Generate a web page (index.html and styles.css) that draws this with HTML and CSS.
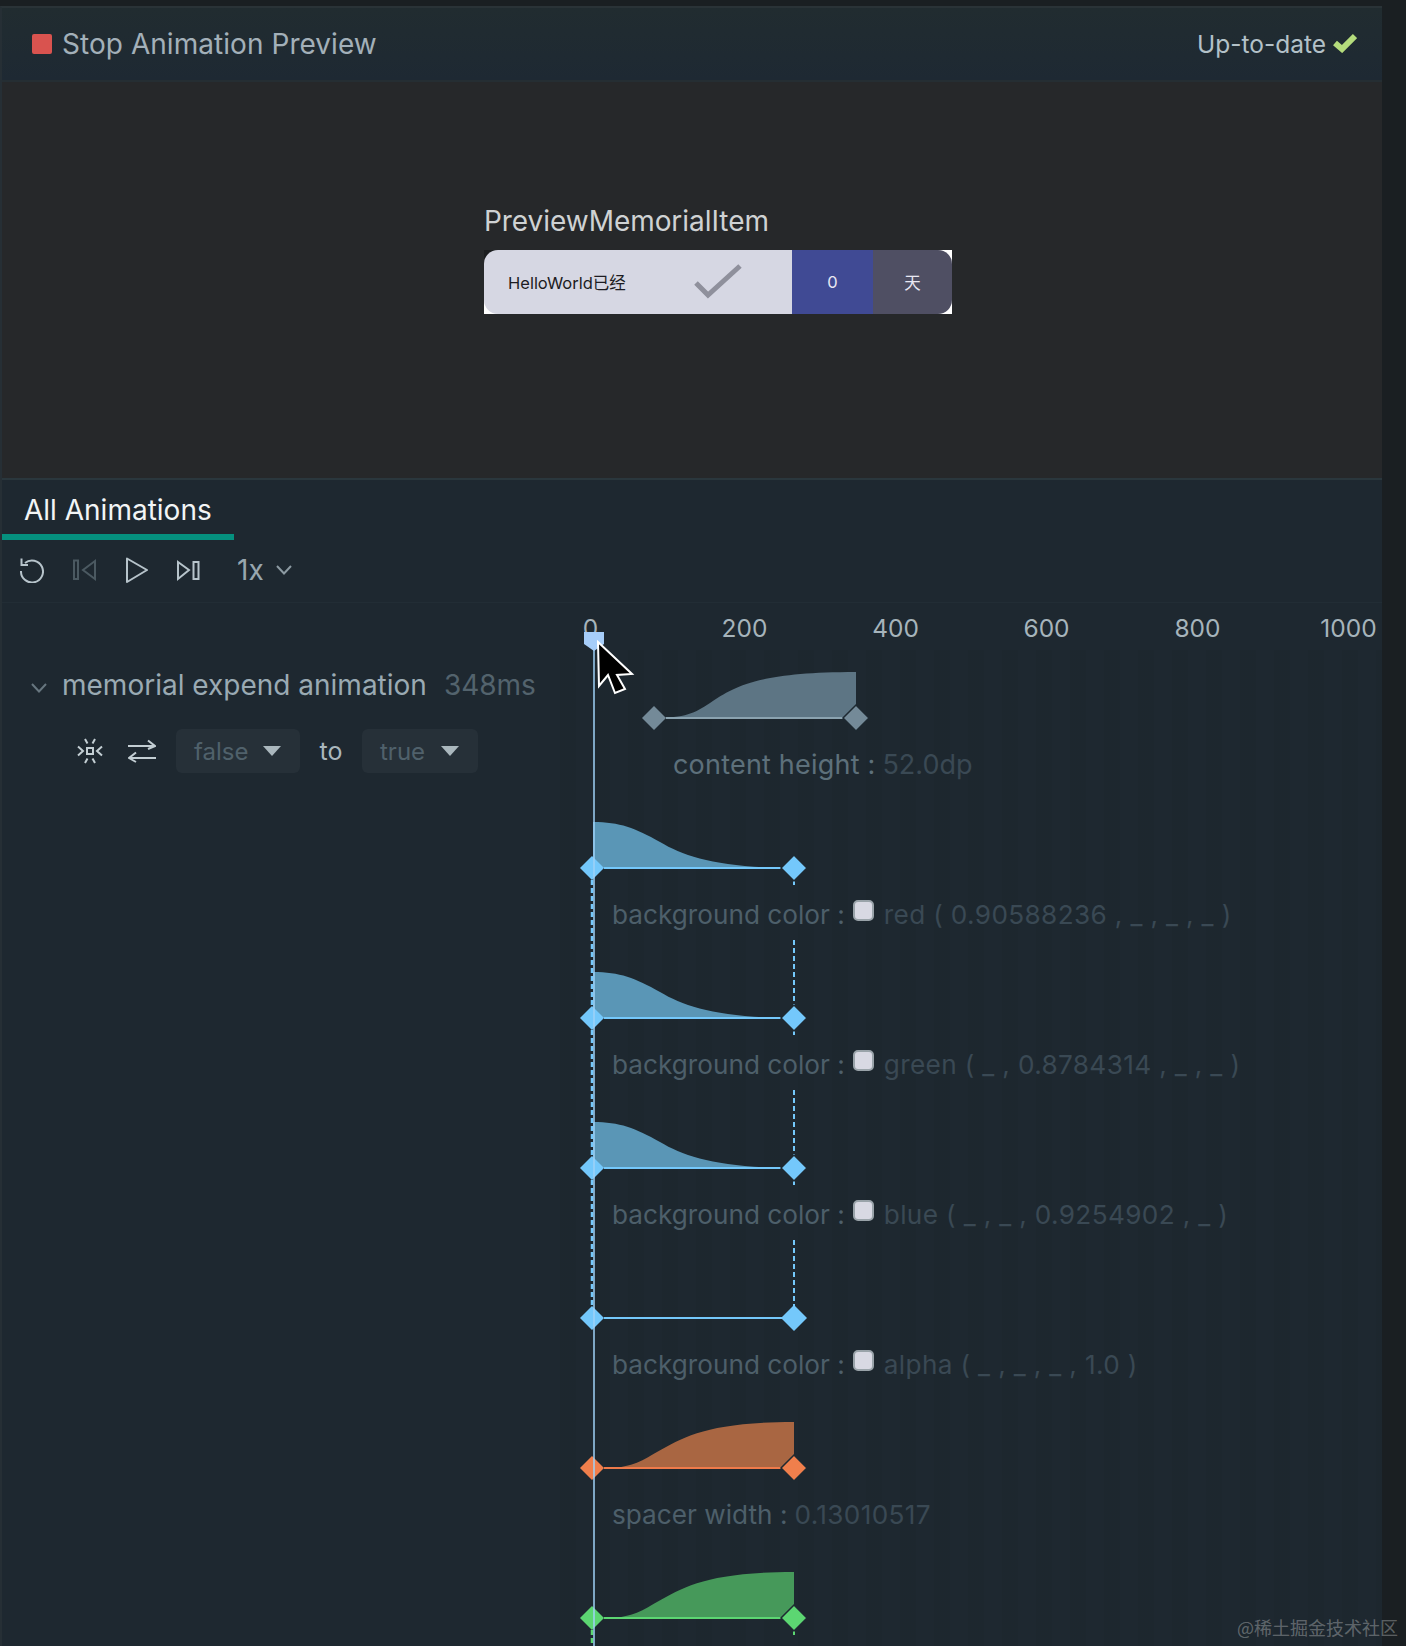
FILE: index.html
```html
<!DOCTYPE html>
<html>
<head>
  <title>Animation Preview</title>
  <link rel="stylesheet" href="styles.css">
</head>
<body>

<div class="app">
  <header class="topbar">
    <div class="stop">
      <span class="stop-icon"></span>
      <span>Stop Animation Preview</span>
    </div>
    <div class="status">
      <span>Up-to-date</span>
      <svg class="status-check" width="24" height="20" viewBox="0 0 24 20"><path d="M2 10 L9 16 L22 3" fill="none" stroke="#b4dc7c" stroke-width="6"/></svg>
    </div>
  </header>

  <section class="preview">
    <div class="preview-title">PreviewMemorialItem</div>
    <div class="item">
      <div class="item-inner">
        <div class="item-main">
          <span>HelloWorld已经</span>
          <svg class="item-check" width="50" height="36" viewBox="0 0 50 36"><path d="M2 19 L14 31 L46 2" fill="none" stroke="#8f909c" stroke-width="5"/></svg>
        </div>
        <div class="item-count">0</div>
        <div class="item-unit">天</div>
      </div>
    </div>
  </section>

  <div class="tabs">
    <div class="tab">All Animations</div>
  </div>

  <div class="toolbar">
    <svg class="tool" width="24" height="26" viewBox="0 0 24 26"><path d="M5 6 A11 11 0 1 1 1 14 M1.5 1.5 V8 H8" fill="none" stroke="#b7c4cb" stroke-width="2"/></svg>
    <svg class="tool" width="24" height="26" viewBox="0 0 24 26"><path d="M2 3.5 H6 V22 H2 Z M23 4 L11 13 L23 22 Z" fill="none" stroke="#4b5961" stroke-width="2"/></svg>
    <svg class="tool" width="24" height="26" viewBox="0 0 24 26"><path d="M3 1.5 L23 13 L3 25 Z" fill="none" stroke="#b7c4cb" stroke-width="2" stroke-linejoin="round"/></svg>
    <svg class="tool" width="24" height="26" viewBox="0 0 24 26"><path d="M2 5 L13 13 L2 22 Z M17.500 5 H22.500 V22 H17.500 Z" fill="none" stroke="#b7c4cb" stroke-width="2"/></svg>
    <span class="speed">1x</span>
    <svg width="16" height="10" viewBox="0 0 16 10"><path d="M1 1 L8 8.500 L15 1" fill="none" stroke="#8c9aa2" stroke-width="2"/></svg>
  </div>

  <div class="anim">
    <aside class="side">
      <div class="anim-title">
        <svg class="anim-chevron" width="16" height="10" viewBox="0 0 16 10"><path d="M1 1 L8 8.500 L15 1" fill="none" stroke="#67767f" stroke-width="2"/></svg>
        <span class="anim-name">memorial expend animation</span>
        <span class="anim-time">348ms</span>
      </div>
      <div class="anim-state">
        <svg width="26" height="26" viewBox="0 0 26 26"><path d="M10 10 H16 V16 H10 Z M8 1 L10.500 5.500 M18 1 L15.500 5.500 M8 25 L10.500 20.500 M18 25 L15.500 20.500 M1 8.500 L6 13 L1 17.500 M25 8.500 L20 13 L25 17.500" fill="none" stroke="#c3ced3" stroke-width="2"/></svg>
        <svg class="swap" width="28" height="24" viewBox="0 0 28 24"><path d="M0 7 H27 M20 1.500 L27 7 L20 10 M28 19 H1 M8 13.500 L1 19 L8 23" fill="none" stroke="#c3ced3" stroke-width="2"/></svg>
        <div class="chip chip-false">false<span class="caret"></span></div>
        <span class="to">to</span>
        <div class="chip chip-true">true<span class="caret"></span></div>
      </div>
    </aside>

    <div class="timeline">
      <div class="ruler">
        <span>0</span><span>200</span><span>400</span><span>600</span><span>800</span><span>1000</span>
      </div>

      <div class="track">
        <svg class="chart" width="320" height="90" viewBox="0 0 320 90">
          <path d="M94 68 C125 68 135 63 150 53 C175 36 200 22 296 22 V68 Z" fill="#5d7584"/>
          <path d="M106 68 H284" stroke="#8ba3b0" stroke-width="2"/>
          <path d="M94 56 L106 68 L94 80 L82 68 Z" fill="#748a98"/>
          <path d="M296 55 L309 68 L296 81 L283 68 Z" fill="#748a98" stroke="#1e2931" stroke-width="1.500"/>
        </svg>
        <div class="label label-first"><span class="key key-bright">content height :</span><span class="value">52.0dp</span></div>
      </div>

      <div class="track">
        <svg class="chart" width="320" height="90" viewBox="0 0 320 90">
          <path d="M33 22 C60 22 75 28 100 42 C125 57 160 68 234 68 H33 Z" fill="#5a96b6"/>
          <path d="M44 68 H222" stroke="#74c8fb" stroke-width="2"/>
          <path d="M234 80 V88" class="dash"/>
          <path d="M32 56 L44 68 L32 80 L20 68 Z" fill="#74c8fb"/>
          <path d="M234 55 L247 68 L234 81 L221 68 Z" fill="#74c8fb" stroke="#1e2931" stroke-width="1.500"/>
        </svg>
        <div class="label"><span class="key">background color :</span><span class="swatch"></span><span class="value">red ( 0.90588236 , _ , _ , _ )</span></div>
      </div>

      <div class="track">
        <svg class="chart" width="320" height="90" viewBox="0 0 320 90">
          <path d="M234 -10 V56 M234 80 V88" class="dash"/>
          <path d="M33 22 C60 22 75 28 100 42 C125 57 160 68 234 68 H33 Z" fill="#5a96b6"/>
          <path d="M44 68 H222" stroke="#74c8fb" stroke-width="2"/>
          <path d="M32 56 L44 68 L32 80 L20 68 Z" fill="#74c8fb"/>
          <path d="M234 55 L247 68 L234 81 L221 68 Z" fill="#74c8fb" stroke="#1e2931" stroke-width="1.500"/>
        </svg>
        <div class="label"><span class="key">background color :</span><span class="swatch"></span><span class="value">green ( _ , 0.8784314 , _ , _ )</span></div>
      </div>

      <div class="track">
        <svg class="chart" width="320" height="90" viewBox="0 0 320 90">
          <path d="M234 -10 V56 M234 80 V88" class="dash"/>
          <path d="M33 22 C60 22 75 28 100 42 C125 57 160 68 234 68 H33 Z" fill="#5a96b6"/>
          <path d="M44 68 H222" stroke="#74c8fb" stroke-width="2"/>
          <path d="M32 56 L44 68 L32 80 L20 68 Z" fill="#74c8fb"/>
          <path d="M234 55 L247 68 L234 81 L221 68 Z" fill="#74c8fb" stroke="#1e2931" stroke-width="1.500"/>
        </svg>
        <div class="label"><span class="key">background color :</span><span class="swatch"></span><span class="value">blue ( _ , _ , 0.9254902 , _ )</span></div>
      </div>

      <div class="track">
        <svg class="chart" width="320" height="90" viewBox="0 0 320 90">
          <path d="M234 -10 V56" class="dash"/>
          <path d="M44 68 H222" stroke="#74c8fb" stroke-width="2"/>
          <path d="M32 56 L44 68 L32 80 L20 68 Z" fill="#74c8fb"/>
          <path d="M234 55 L247 68 L234 81 L221 68 Z" fill="#74c8fb"/>
        </svg>
        <div class="label"><span class="key">background color :</span><span class="swatch"></span><span class="value">alpha ( _ , _ , _ , 1.0 )</span></div>
      </div>

      <div class="track">
        <svg class="chart" width="320" height="90" viewBox="0 0 320 90">
          <path d="M45 68 C70 68 80 62 97 52 C125 36 150 22 234 22 V68 Z" fill="#a96642"/>
          <path d="M44 68 H222" stroke="#ee7a4a" stroke-width="2"/>
          <path d="M32 56 L44 68 L32 80 L20 68 Z" fill="#f07f4c"/>
          <path d="M234 55 L247 68 L234 81 L221 68 Z" fill="#f07f4c" stroke="#1e2931" stroke-width="1.500"/>
        </svg>
        <div class="label"><span class="key">spacer width :</span><span class="value">0.13010517</span></div>
      </div>

      <div class="track">
        <svg class="chart" width="320" height="90" viewBox="0 0 320 90">
          <path d="M45 68 C70 68 80 62 97 52 C125 36 150 22 234 22 V68 Z" fill="#46995a"/>
          <path d="M44 68 H222" stroke="#5cd672" stroke-width="2"/>
          <path d="M234 80 V88" class="dash dash-green"/>
          <path d="M32 56 L44 68 L32 80 L20 68 Z" fill="#5cd672"/>
          <path d="M234 55 L247 68 L234 81 L221 68 Z" fill="#5cd672" stroke="#1e2931" stroke-width="1.500"/>
        </svg>
      </div>

      <!-- playhead, mouse pointer and the dashed line sit over the tracks -->
      <svg class="playhead" width="100" height="1043" viewBox="0 0 100 1043">
        <path d="M32 277 V403 M32 427 V553 M32 577 V703" stroke="#74c8fb" stroke-width="2.500" stroke-dasharray="5 3" fill="none"/>
        <path d="M32 1027 V1043" stroke="#5cd672" stroke-width="2.500" stroke-dasharray="5 3" fill="none"/>
        <path d="M34 36 V1043" stroke="#9fd2f7" stroke-width="1.500"/>
        <path d="M24 29 H44 V41 L34 48 L24 41 Z" fill="#a6cdf9"/>
        <path d="M38 39 L72 71 L57 72 L65 86 L55 90 L48 72 L39 83 Z" fill="#000" stroke="#fff" stroke-width="2"/>
      </svg>
    </div>
  </div>
</div>

<div class="watermark">@稀土掘金技术社区</div>

</body>
</html>
```

FILE: styles.css
```css
body {
  margin: 0;
  padding: 0;
  height: 1646px;
  overflow: hidden;
  background: #1a1f22;
  font-family: "Inter", "Noto Sans CJK SC", sans-serif;
}

.app {
  width: 1380px;
  height: 1640px;
  margin-top: 6px;
  border-top: 2px solid #2a3337;
  border-left: 2px solid #262f35;
  overflow: hidden;
  background: #1e2830;
}

.topbar {
  height: 74px;
  box-sizing: border-box;
  padding: 0 25px 0 30px;
  display: flex;
  align-items: center;
  justify-content: space-between;
  background: linear-gradient(180deg, #212c30, #1e2933);
  border-bottom: 2px solid #252e33;
}
.stop {
  display: flex;
  align-items: center;
  gap: 10px;
  font-size: 28px;
  letter-spacing: 0.05px;
  color: #a3b0b9;
}
.stop-icon {
  width: 20px;
  height: 20px;
  border-radius: 2px;
  background: #d9534f;
}
.status {
  display: flex;
  align-items: center;
  gap: 7px;
  font-size: 24.5px;
  color: #b3c1c8;
}
.status-check {
  margin-bottom: 3px;
}

.preview {
  height: 398px;
  box-sizing: border-box;
  padding: 122px 0 0 482px;
  background: #26282a;
  border-bottom: 2px solid #2a373d;
}
.preview-title {
  font-size: 28px;
  line-height: 34px;
  letter-spacing: -0.05px;
  color: #cfd2d3;
}
.item {
  width: 468px;
  height: 64px;
  margin-top: 12px;
  background: linear-gradient(90deg, #1b1d1f 14px, #fff 14px) top / 100% 50% no-repeat, #fff;
}
.item-inner {
  height: 100%;
  display: flex;
  border-radius: 14px;
  overflow: hidden;
}
.item-main {
  width: 308px;
  box-sizing: border-box;
  padding-left: 24px;
  display: flex;
  align-items: center;
  font-size: 16.5px;
  color: #1d1c22;
  background: #d6d7e3;
}
.item-check {
  margin-left: 68px;
}
.item-count, .item-unit {
  display: flex;
  align-items: center;
  justify-content: center;
  font-size: 16.5px;
  color: #e8e8f2;
}
.item-count {
  width: 81px;
  background: #404a94;
}
.item-unit {
  width: 79px;
  background: #4f4f63;
}

.tabs {
  height: 60px;
}
.tab {
  width: 232px;
  height: 60px;
  box-sizing: border-box;
  padding: 13px 0 0 22px;
  font-size: 28px;
  line-height: 34px;
  color: #f2f5f6;
  border-bottom: 6px solid #05907e;
}

.toolbar {
  height: 63px;
  box-sizing: border-box;
  padding: 0 0 3px 18px;
  display: flex;
  align-items: center;
  gap: 28px;
  border-bottom: 1px solid #222d35;
}
.speed {
  margin-left: 9px;
  margin-right: -16px;
  font-size: 28px;
  color: #98a6ae;
}

.anim {
  display: flex;
}
.side {
  width: 558px;
  flex: none;
}
.anim-title {
  height: 60px;
  margin-top: 52px;
  padding-left: 29px;
  display: flex;
  align-items: center;
}
.anim-chevron {
  margin-top: 6px;
}
.anim-name {
  margin-left: 15px;
  font-size: 28px;
  color: #9aaab3;
}
.anim-time {
  margin-left: 17px;
  font-size: 28px;
  color: #53636d;
}
.anim-state {
  margin-top: 14px;
  padding-left: 75px;
  display: flex;
  align-items: center;
}
.swap {
  margin-left: 25px;
}
.chip {
  height: 44px;
  box-sizing: border-box;
  display: flex;
  align-items: center;
  justify-content: space-between;
  border-radius: 6px;
  background: #263038;
  font-size: 24px;
  color: #50616b;
}
.chip-false {
  width: 124px;
  margin-left: 20px;
  padding: 0 19px 0 18px;
}
.chip-true {
  width: 116px;
  padding: 0 19px 0 18px;
}
.caret {
  width: 0;
  height: 0;
  border-left: 9px solid transparent;
  border-right: 9px solid transparent;
  border-top: 10px solid #aab7bd;
}
.to {
  width: 62px;
  text-align: center;
  font-size: 25px;
  color: #aab7bd;
}

.timeline {
  position: relative;
  flex: 1;
  height: 1043px;
  background: repeating-linear-gradient(90deg, rgba(0, 0, 0, 0.035) 0 16px, transparent 16px 34px) 0 47px no-repeat;
}
.ruler {
  height: 47px;
  margin-left: -48px;
  display: flex;
  font-size: 24.5px;
  line-height: 50px;
  color: #a6b4bb;
}
.ruler span {
  width: 151px;
  flex: none;
  text-align: center;
}
.ruler span:first-child {
  width: 157px;
}

.track {
  height: 150px;
}
.chart {
  display: block;
  overflow: visible;
}
.dash {
  fill: none;
  stroke: #74c8fb;
  stroke-width: 2;
  stroke-dasharray: 5 3;
}
.dash-green {
  stroke: #5cd672;
}
.label {
  height: 48px;
  padding-left: 52px;
  display: flex;
  align-items: center;
  font-size: 26.2px;
  white-space: nowrap;
}
.label-first {
  padding-left: 113px;
  font-size: 27px;
}
.key {
  color: #4d5f6a;
}
.key-bright {
  color: #5d707b;
  letter-spacing: 0.2px;
}
.value {
  margin-left: 7px;
  letter-spacing: 0.35px;
  color: #3a4954;
}
.key-bright + .value {
  letter-spacing: 0;
}
.swatch {
  width: 17px;
  height: 17px;
  margin: -8px -1px 0 8px;
  border: 2px solid #99a3a9;
  border-radius: 5px;
  background: #d8d9e3;
}
.swatch + .value {
  margin-left: 11px;
}

.playhead {
  position: absolute;
  left: 0;
  top: 0;
}

.watermark {
  position: absolute;
  right: 8px;
  bottom: 6px;
  font-family: "Noto Sans CJK SC", sans-serif;
  font-size: 18px;
  color: rgba(255, 255, 255, 0.3);
}
```
